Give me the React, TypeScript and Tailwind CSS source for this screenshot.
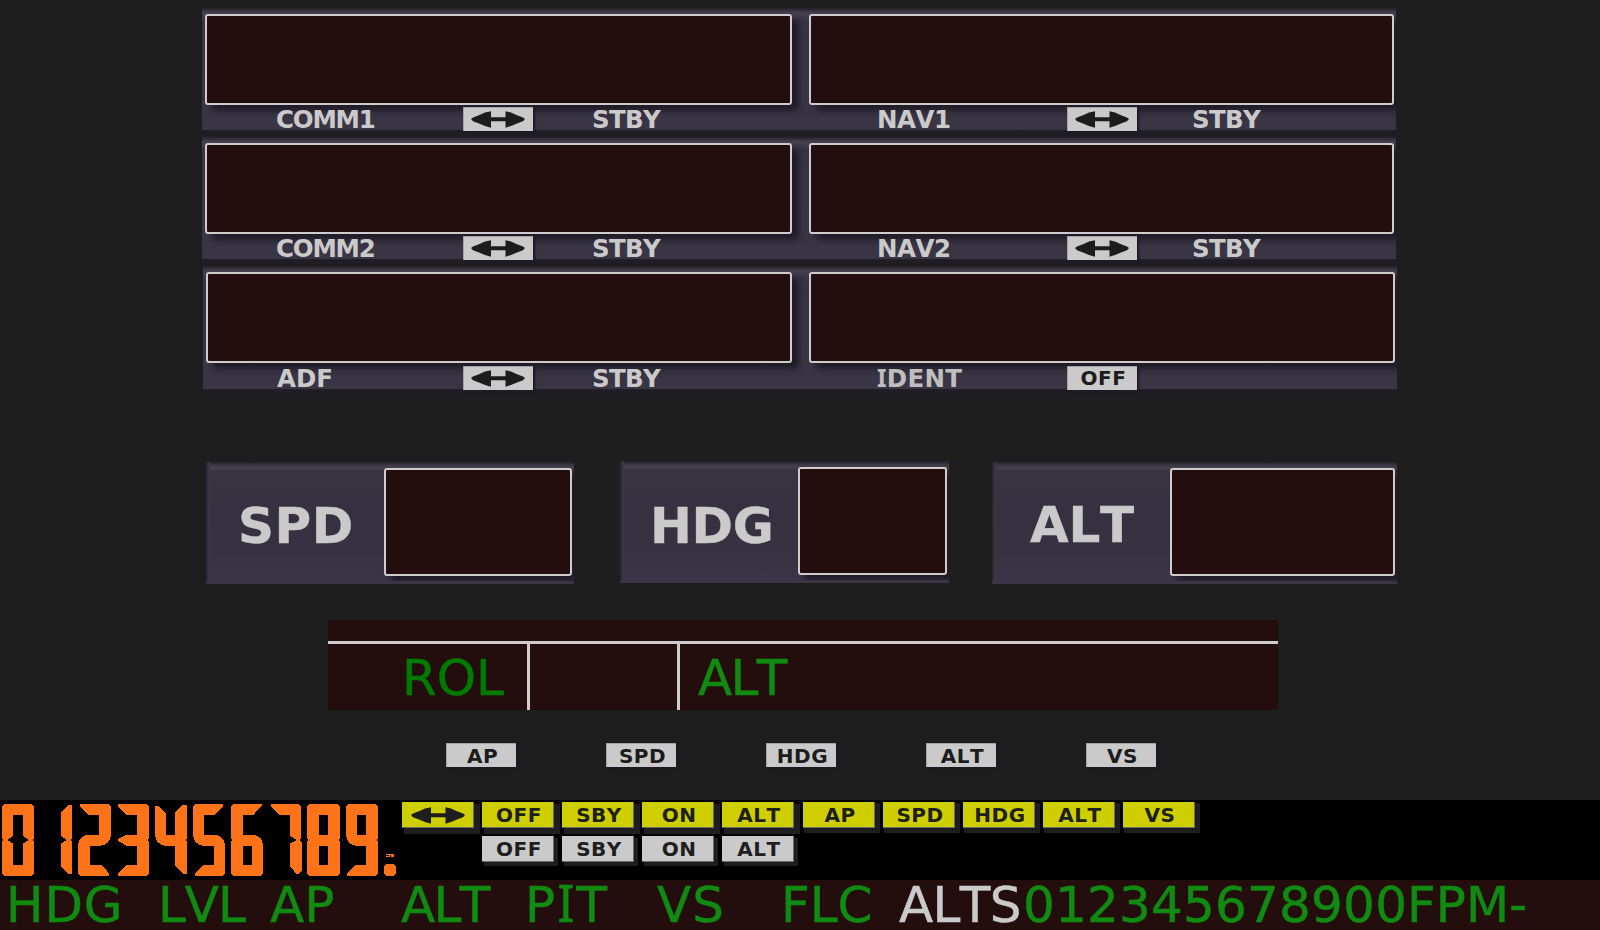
import React from "react";

const SANS = "font-['DejaVu_Sans',Verdana,sans-serif] [font-kerning:none]";

function Screen({ className }: { className: string }) {
  return (
    <div
      className={`shrink-0 rounded-[3px] border-2 border-[#cecccc] bg-[#230d0d] shadow-[7px_6px_6px_0px_#1f1c28] ${className}`}
    />
  );
}

function Arrow({ className }: { className: string }) {
  return (
    <svg viewBox="0 0 54 17" className={`h-[17px] w-[54px] shrink-0 ${className}`}>
      <path
        d="M0 8 L2 6.4 L8 4.2 L14 1.6 L20 .2 V6.2 H34.5 V.2 L40 1.6 L46 4.2 L52 6.4 L54 8 L52 10.2 L46 12.6 L40 15 L34.5 16.7 V10.3 H20 V16.7 L14 15 L8 12.6 L2 10.2 Z"
        fill="currentColor"
      />
    </svg>
  );
}

function Key({ label }: { label?: string }) {
  return (
    <div className="flex h-6 w-[70px] shrink-0 items-center justify-center border-l border-t border-[#a5a4a4] bg-[#cbcaca] text-[20px] leading-[24px] font-bold tracking-[0.5px] text-[#1c1c1c] shadow-[2px_1px_2px_#1b1922]">
      {label ? <span className="pl-[2px]">{label}</span> : <Arrow className="mr-px" />}
    </div>
  );
}

function RadioRow({
  left,
  right,
  off,
  last,
}: {
  left: React.ReactNode;
  right: React.ReactNode;
  off?: boolean;
  last?: boolean;
}) {
  return (
    <div
      className={`h-[129px] w-[1194px] overflow-hidden ${
        last
          ? "ml-px bg-[linear-gradient(#1d1b20_0px,#2a2730_2px,#464150_6px,#383445_14px,#3a3545_124px,#201e27_124px,#1e1d22_129px)]"
          : "bg-[linear-gradient(#1d1b20_0px,#2a2730_2px,#464150_6px,#383445_14px,#3a3545_123px,#201e27_123px,#1e1d22_129px)]"
      }`}
    >
      <div className="flex pt-[7px] pl-[3px]">
        <Screen className={last ? "h-[91px] w-[586px]" : "h-[91px] w-[587px]"} />
        <Screen className={last ? "ml-[17px] h-[91px] w-[586px]" : "ml-[17px] h-[91px] w-[585px]"} />
      </div>
      <div
        className={`flex items-center text-[24.5px] leading-[28px] font-bold whitespace-nowrap text-[#cbcaca] ${
          last ? "-ml-px h-[29px]" : "h-[28px]"
        }`}
      >
        <div className={`w-[261px] pt-[2px] ${last ? "pl-[75px]" : "pl-[74px] tracking-[-1.2px]"}`}>{left}</div>
        <Key />
        <div className="ml-[59px] w-[284px] pt-[2px] tracking-[-0.7px]">STBY</div>
        <div className={`w-[191px] pt-[2px] pl-px ${last ? "tracking-[0.3px]" : "tracking-[-0.5px]"}`}>{right}</div>
        <Key label={off ? "OFF" : undefined} />
        {!off && <div className="ml-[55px] pt-[2px] tracking-[-0.7px]">STBY</div>}
      </div>
    </div>
  );
}

function Setting({ label, panel, text, screen }: { label: string; panel: string; text: string; screen: string }) {
  return (
    <div
      className={`flex h-[122px] shrink-0 overflow-hidden border-b-[3px] border-[#3a3545] bg-[linear-gradient(#211f25_0px,#3a3641_3px,#474150_6px,#3a3341_9px,#353140_50px,#363241_90px,#3b3647_119px)] ${panel}`}
    >
      <div className="w-[4px] shrink-0 bg-[linear-gradient(90deg,#26232c,#403c4a)]" />
      <div
        className={`w-[174px] shrink-0 text-[50px] leading-[128px] font-bold whitespace-nowrap text-[#cbcaca] [-webkit-text-stroke:0.4px_#cbcaca] ${text}`}
      >
        {label}
      </div>
      <Screen className={`mt-[6px] h-[108px] ${screen}`} />
    </div>
  );
}

const DIGITS = [
  "M14 42H94L102 50V145L97 150L102 155V250L94 258H14L6 250V155L12 150L6 145V50ZM39 75V138L24 148V152L39 160V225H69V160L84 152V148L69 138V75Z",
  "M204 45H216V145L211 150L216 155V251H204L183 228V160L198 152V148L183 138V68Z",
  "M240 42H325L333 50V134Q331 162 303 167H270V225H306L327 250V258H242L234 250V166Q236 139 264 134H297V75H264L240 49Z",
  "M354 42H439L447 50V145L442 150L447 155V250L439 258H354V251L378 225H411V167H378L354 152V148L378 134H411V75H378L354 49Z",
  "M473 47L497 70V134H525V68L548 45H561V145L556 150L561 155V251H548L525 228V167H495Q467 163 465 134V47Z",
  "M587 42H669V50L645 75H612V134H645Q673 138 675 166V250L667 258H585V250L609 225H642V167H609Q581 163 579 134V50Z",
  "M701 42H785V49L759 75H728V134H759Q787 138 789 166V250L781 258H701L693 250V155L698 150L693 145V50ZM728 167V225H756V167Z",
  "M813 42H895L903 50V145L899 150L906 157V240L897 251H888L870 228V160L888 152V148L870 138V75H837L813 49Z",
  "M929 42H1012L1020 50V145L1015 150L1020 155V250L1012 258H929L921 250V155L926 150L921 145V50ZM957 75V134H984V75ZM957 167V225H984V167Z",
  "M1046 42H1126L1134 50V145L1129 150L1134 155V250L1126 258H1042V250L1066 225H1098V167H1066Q1040 162 1038 134V50ZM1071 75V134H1098V75Z",
  "M1158 222H1182L1188 229V250L1182 258H1158L1152 250V229ZM1158 192H1181V200H1174V195H1170V201H1158V198H1166V195H1158Z",
];

function LitKey({ label, color }: { label: string; color: string }) {
  return (
    <div className="h-[32px] w-20 shrink-0 pl-[2px]">
      <div
        className={`flex h-[26px] w-[72px] items-center justify-center border-r border-b border-[#6b6b6b] text-[20px] leading-[26px] font-bold tracking-[0.5px] text-[#1e1e1e] ${color}`}
      >
        {label === "<>" ? <Arrow className="mt-[2px]" /> : <span className="pt-px pl-[3px]">{label}</span>}
      </div>
    </div>
  );
}

const YELLOW = "bg-[#cece00] shadow-[4px_4px_0_2px_#1e1e1e]";
const YELLOW_NARROW = "bg-[#cece00] shadow-[3px_3px_0_2px_#1e1e1e]";
const GREY = "bg-[#cbcaca] shadow-[3px_3px_0_1px_#1e1e1e]";

export default function App() {
  return (
    <div className={`h-[930px] w-[1600px] overflow-hidden bg-[#1e1e1e] ${SANS}`}>
      <div className="h-[454px] pt-[7px] pl-[202px]">
        <RadioRow left="COMM1" right="NAV1" />
        <RadioRow left="COMM2" right="NAV2" />
        <RadioRow
          left="ADF"
          right={
            <span className="text-[#bfbebe]">
              <span className="font-['Noto_Sans',sans-serif] leading-[0]">I</span>DENT
            </span>
          }
          off
          last
        />
      </div>

      <div className="flex h-[166px] pt-[8px] pl-[206px]">
        <Setting label="SPD" panel="w-[368px]" text="pl-[28px] tracking-[0.5px]" screen="w-[188px]" />
        <Setting label="HDG" panel="ml-[46px] -mt-px w-[329px]" text="pl-[26px] tracking-[-0.3px] pt-px" screen="w-[149px]" />
        <Setting label="ALT" panel="ml-[43px] w-[405px]" text="-mt-px pl-[34px] tracking-[-0.3px]" screen="w-[225px]" />
      </div>

      <div className="h-[123px] pl-[328px]">
        <div className="h-[90px] w-[950px] bg-[#230d0d]">
          <div className="h-[24px] border-b-[3px] border-[#cecccc]" />
          <div className="flex h-[66px] text-[50px] leading-[68px] text-[#108a10]">
            <div className="w-[202px] border-r-[3px] border-[#cecccc] pl-[74px] text-[#007a00] [-webkit-text-stroke:0.5px_#007a00]">
              ROL
            </div>
            <div className="w-[150px] border-r-[3px] border-[#cecccc]" />
            <div className="pl-[18px] tracking-[-1.7px] [-webkit-text-stroke:0.5px_#108a10]">ALT</div>
          </div>
        </div>
      </div>

      <div className="flex h-[57px] gap-[90px] pl-[446px]">
        {["AP", "SPD", "HDG", "ALT", "VS"].map((l) => (
          <Key key={l} label={l} />
        ))}
      </div>

      <div className="flex h-20 bg-black">
        <svg viewBox="0 30 1200 240" className="h-20 w-[400px] shrink-0" shapeRendering="crispEdges">
          {DIGITS.map((d, i) => (
            <path key={i} d={d} fill="#ff7318" fillRule="evenodd" />
          ))}
        </svg>
        <div className="pt-[2px]">
          <div className="flex h-[34px]">
            {["<>", "OFF", "SBY", "ON", "ALT"].map((l) => (
              <LitKey key={l} label={l} color={YELLOW} />
            ))}
            <div className="flex pl-px">
              {["AP", "SPD", "HDG", "ALT", "VS"].map((l) => (
                <LitKey key={l} label={l} color={YELLOW_NARROW} />
              ))}
            </div>
          </div>
          <div className="flex pl-20">
            {["OFF", "SBY", "ON", "ALT"].map((l) => (
              <LitKey key={l} label={l} color={GREY} />
            ))}
          </div>
        </div>
      </div>

      <div className="flex h-[50px] bg-[#230d0d] pl-[6px] text-[50px] leading-[50px] whitespace-nowrap text-[#108a10] [-webkit-text-stroke:0.5px_currentColor]">
        <div className="w-[152px] shrink-0 tracking-[0.8px]">HDG</div>
        <div className="w-[112px] shrink-0 tracking-[-1px]">LVL</div>
        <div className="w-[131px] shrink-0">AP</div>
        <div className="w-[124px] shrink-0 tracking-[-1.7px]">ALT</div>
        <div className="w-[132px] shrink-0 tracking-[2px]">
          P<span className="font-['Noto_Sans',sans-serif] text-[51px] leading-[0]">I</span>T
        </div>
        <div className="w-[124px] shrink-0 tracking-[1px]">VS</div>
        <div className="w-[118px] shrink-0">FLC</div>
        <div className="w-[124px] shrink-0 tracking-[-0.6px] text-[#cbcaca]">ALTS</div>
        <div className="w-[384px] shrink-0 tracking-[0.2px]">012345678900</div>
        <div className="shrink-0">FPM-</div>
      </div>
    </div>
  );
}
